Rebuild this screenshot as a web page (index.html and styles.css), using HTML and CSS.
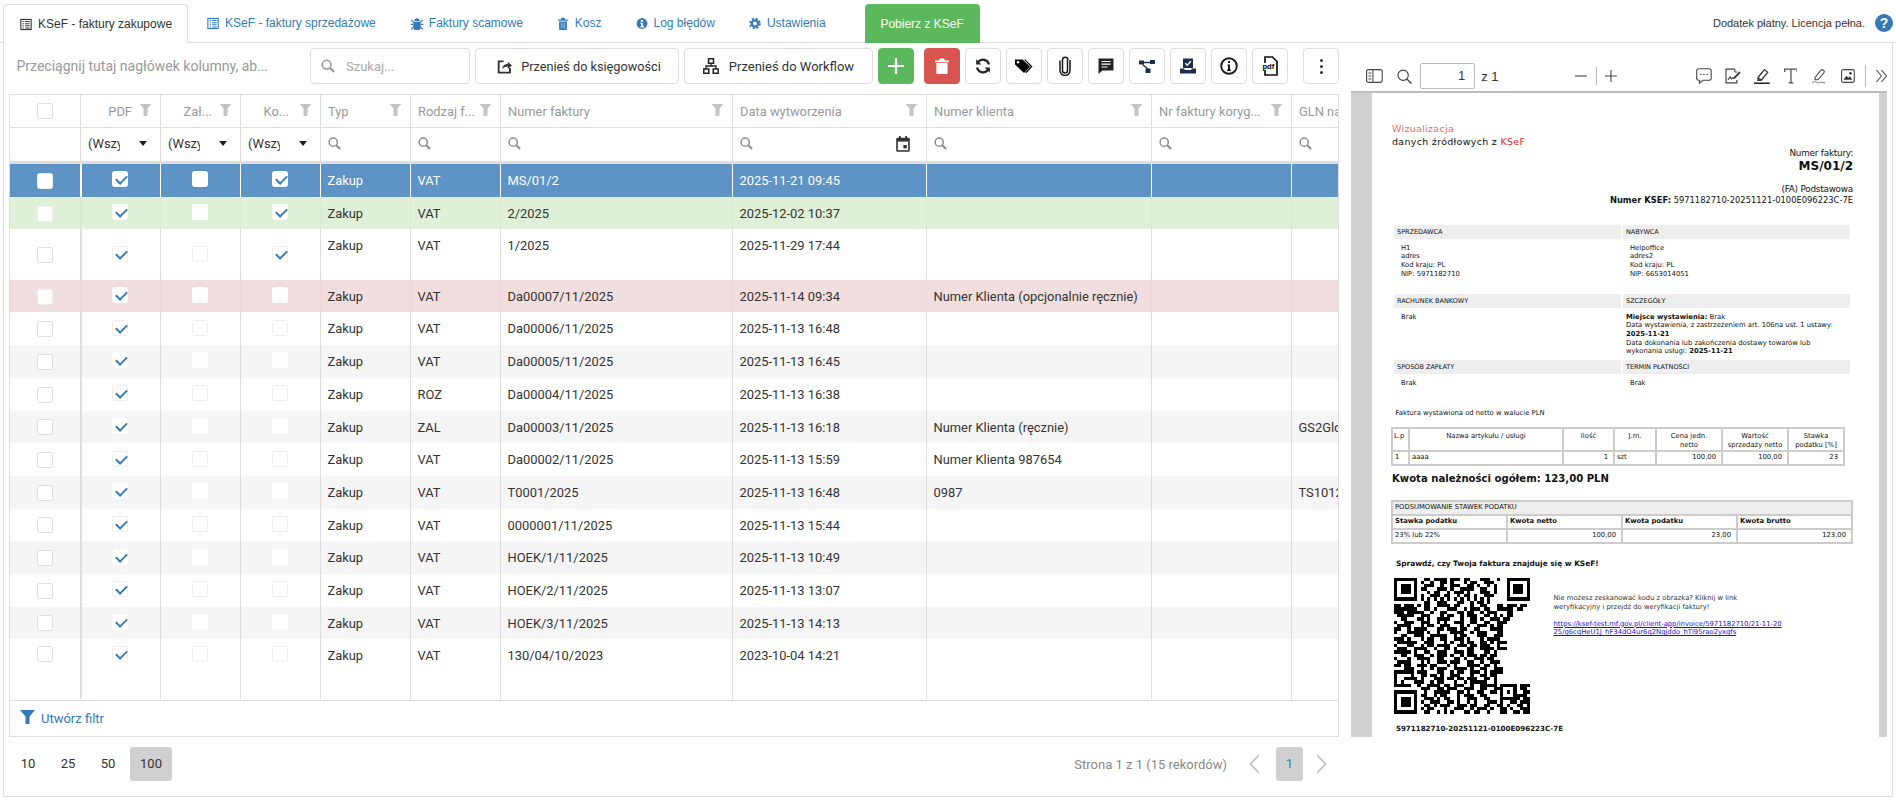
FILE: index.html
```html
<!DOCTYPE html>
<html lang="pl">
<head>
<meta charset="utf-8">
<title>KSeF - faktury zakupowe</title>
<link rel="stylesheet" href="styles.css">
</head>
<body>
<svg class="defs" xmlns="http://www.w3.org/2000/svg">
  <symbol id="i-funnel" viewBox="0 0 15 14"><path d="M0 0h15L9.500 6.500V14h-4V6.500z" fill="currentColor"/></symbol>
  <symbol id="i-search" viewBox="0 0 14 14"><circle cx="5.600" cy="5.600" r="4.400" fill="none" stroke="currentColor" stroke-width="1.600"/><path d="M8.800 8.800L13 13" stroke="currentColor" stroke-width="2.200" fill="none"/></symbol>
  <symbol id="i-list" viewBox="0 0 14 14"><path d="M1 1h12v12H1z" fill="none" stroke="currentColor" stroke-width="1.300"/><path d="M3 3.500h1.500M6 3.500h5.200M3 6h1.500M6 6h5.200M3 8.500h1.500M6 8.500h5.200M3 11h1.500M6 11h5.200" stroke="currentColor" stroke-width="1.200" fill="none"/></symbol>
  <symbol id="i-trash" viewBox="0 0 14 16"><path d="M1 3h12v1.600H1zM5 1h4l.6 2H4.400zM2.200 5.400h9.600V15a1 1 0 0 1-1 1H3.200a1 1 0 0 1-1-1z" fill="currentColor"/><path d="M5 7v7M7 7v7M9 7v7" stroke="#fff" stroke-width=".8" opacity=".7"/></symbol>
</svg>

<div class="tabs">
  <a class="tab active"><svg class="ti" viewBox="0 0 14 14"><use href="#i-list"/></svg>KSeF - faktury zakupowe</a>
  <a class="tab"><svg class="ti" viewBox="0 0 14 14"><use href="#i-list"/></svg>KSeF - faktury sprzedażowe</a>
  <a class="tab"><svg class="ti wide" viewBox="0 0 14 14"><path d="M4.200 4.200a2.800 2.800 0 0 1 5.600 0zM3.600 5h6.800a1 1 0 0 1 .6 1v4.500a4 4 0 0 1-8 0V6a1 1 0 0 1 .6-1z" fill="currentColor"/><path d="M0.800 3l2.400 2.600M13.200 3l-2.400 2.600M.2 8h2.800M11 8h2.800M.8 13.400l2.600-2.600M13.200 13.400l-2.600-2.600" stroke="currentColor" stroke-width="1.300" fill="none"/></svg>Faktury scamowe</a>
  <a class="tab"><svg class="ti" viewBox="0 0 14 16"><use href="#i-trash"/></svg>Kosz</a>
  <a class="tab"><svg class="ti" viewBox="0 0 14 14"><circle cx="7" cy="7" r="6.300" fill="currentColor"/><path d="M5.600 3h2.600v2H5.600zM5.200 6h3v4h1v1.600H5.200V10h1V7.600h-1z" fill="#fff"/></svg>Log błędów</a>
  <a class="tab"><svg class="ti" viewBox="0 0 14 14"><circle cx="7" cy="7" r="3.600" fill="none" stroke="currentColor" stroke-width="2.600"/><circle cx="7" cy="7" r="5.700" fill="none" stroke="currentColor" stroke-width="2" stroke-dasharray="2.500 2"/></svg>Ustawienia</a>
  <a class="tab tab-green">Pobierz z KSeF</a>
  <div class="license">Dodatek płatny. Licencja pełna.<span class="help">?</span></div>
</div>

<div class="panel">
  <div class="left">
    <div class="toolbar">
      <div class="groupby">Przeciągnij tutaj nagłówek kolumny, ab...</div>
      <div class="searchbox"><svg class="sb-icon"><use href="#i-search"/></svg><span>Szukaj...</span></div>
      <button class="btn b1"><svg class="bi" viewBox="0 0 16 16"><path d="M7 2.500H1.800v12h12V9.500" fill="none" stroke="#333" stroke-width="2"/><path d="M5.500 11c.3-3.600 2.600-5.600 6-5.600V3L16 6.800l-4.500 3.800V8c-2.500 0-4.500 1-6 3z" fill="#333"/></svg>Przenieś do księgowości</button>
      <button class="btn b2"><svg class="bi" viewBox="0 0 16 16"><path d="M5.500 .8h5v4.400h-5zM.8 11h5v4.200H.8zM10.200 11h5v4.200h-5z" fill="none" stroke="#222" stroke-width="1.500"/><path d="M8 5v3M3 11V8h10v3" fill="none" stroke="#222" stroke-width="1.300"/></svg>Przenieś do Workflow</button>
      <button class="btn ib green"><svg class="ic16" viewBox="0 0 16 16"><path d="M8 0v16M0 8h16" stroke="#fff" stroke-width="2.200"/></svg></button>
      <button class="btn ib del gap-l"><svg class="ic-trash" viewBox="0 0 14 16"><path d="M0 2.500h14v1.800H0zM4.800 .5h4.400l.6 2H4.200zM1.400 5h11.200v10a1 1 0 0 1-1 1H2.400a1 1 0 0 1-1-1z" fill="#fff"/></svg></button>
      <button class="btn ib"><svg class="ic16" viewBox="0 0 16 16"><path d="M14 6.400A6.200 6.200 0 0 0 3.300 3.800" fill="none" stroke="#222" stroke-width="2.200"/><path d="M1.200 1.300v5.200h5.200z" fill="#222"/><path d="M2 9.600a6.200 6.200 0 0 0 10.700 2.600" fill="none" stroke="#222" stroke-width="2.200"/><path d="M14.800 14.700V9.500H9.600z" fill="#222"/></svg></button>
      <button class="btn ib"><svg class="ic18" viewBox="0 0 18 16"><path d="M0 1.500h7.500L15 8.500l-6 6.500L0 6.500z" fill="#000"/><path d="M9 1.500h1.500L17.500 8.500l-6 6.500-1.300-.8 5.500-5.700z" fill="#000"/><circle cx="3" cy="4.300" r="1.200" fill="#fff"/></svg></button>
      <button class="btn ib"><svg class="ic-clip" viewBox="0 0 12 20"><path d="M8.500 4.500v10a2.500 2.500 0 0 1-5 0V4a2.700 2.700 0 0 1 5.400 0M8.500 4v1M1 4.500v10a5 5 0 0 0 10 0V4" fill="none" stroke="#1a1a1a" stroke-width="1.500"/></svg></button>
      <button class="btn ib"><svg class="ic16" viewBox="0 0 16 16"><path d="M.5 .5h15v12H4.500L.5 16z" fill="#222"/><path d="M3.500 3.500h9M3.500 6.200h9M3.500 9h6" stroke="#fff" stroke-width="1.200"/></svg></button>
      <button class="btn ib"><svg class="ic16" viewBox="0 0 16 16"><path d="M0 2.500h5v4H0zM11 2h5v4h-5zM6.500 10.500h5v4.500h-5z" fill="#1c2e4a"/><path d="M5 4.500h6M3.500 6.500L9 11" stroke="#1c2e4a" stroke-width="1.300"/></svg></button>
      <button class="btn ib"><svg class="ic16" viewBox="0 0 16 16"><path d="M3 .5h10v9.500H3zM0 10.500h4.500v1.500h7v-1.500H16V15.500H0z" fill="#1c2e4a"/><path d="M5.300 5.200L7.300 7.200 10.800 3.300" fill="none" stroke="#fff" stroke-width="1.300"/></svg></button>
      <button class="btn ib"><svg class="ic18" viewBox="0 0 18 18"><circle cx="9" cy="9" r="7.800" fill="none" stroke="#1a1a1a" stroke-width="1.900"/><path d="M8 4h2v2H8zM7.500 7.500H10V12.500h1V14H7V12.500h1V9H7.500z" fill="#1a1a1a"/></svg></button>
      <button class="btn ib"><svg class="ic-pdf" viewBox="0 0 16 20"><path d="M3 1h7.500L15 5.500V19H3z" fill="none" stroke="#111" stroke-width="1.700"/><path d="M0 7h13v7H0z" fill="#fff"/><text class="pdf-txt" x="0.500" y="13">pdf</text></svg></button>
      <button class="btn ib gap-xl"><span class="kebab"><i></i><i></i><i></i></span></button>
    </div>

    <div class="grid">
      <div class="grid-scroll">
      <table class="tbl">
        <colgroup><col class="c1"><col class="c2"><col class="c2"><col class="c2"><col class="c3"><col class="c3"><col class="c4"><col class="c5"><col class="c6"><col class="c7"><col class="c8"></colgroup>
        <thead>
          <tr class="hd">
            <th class="ctr"><span class="cb hcb"></span></th>
            <th><div class="hc end"><span>PDF</span><svg class="fn"><use href="#i-funnel"/></svg></div></th>
            <th><div class="hc end"><span>Zał...</span><svg class="fn"><use href="#i-funnel"/></svg></div></th>
            <th><div class="hc end"><span>Ko...</span><svg class="fn fn-w"><use href="#i-funnel"/></svg></div></th>
            <th><div class="hc"><span>Typ</span><svg class="fn"><use href="#i-funnel"/></svg></div></th>
            <th><div class="hc"><span>Rodzaj f...</span><svg class="fn"><use href="#i-funnel"/></svg></div></th>
            <th><div class="hc"><span>Numer faktury</span><svg class="fn"><use href="#i-funnel"/></svg></div></th>
            <th><div class="hc"><span>Data wytworzenia</span><svg class="fn"><use href="#i-funnel"/></svg></div></th>
            <th><div class="hc"><span>Numer klienta</span><svg class="fn"><use href="#i-funnel"/></svg></div></th>
            <th><div class="hc"><span>Nr faktury koryg...</span><svg class="fn"><use href="#i-funnel"/></svg></div></th>
            <th><div class="hc"><span>GLN nabywcy</span><svg class="fn"><use href="#i-funnel"/></svg></div></th>
          </tr>
          <tr class="fl">
            <th></th>
            <th><div class="sel"><span>(Wszystkie)</span><i></i></div></th>
            <th><div class="sel"><span>(Wszystkie)</span><i></i></div></th>
            <th><div class="sel"><span>(Wszystkie)</span><i></i></div></th>
            <th><svg class="srch"><use href="#i-search"/></svg></th>
            <th><svg class="srch"><use href="#i-search"/></svg></th>
            <th><svg class="srch"><use href="#i-search"/></svg></th>
            <th><div class="datef"><svg class="srch"><use href="#i-search"/></svg><svg class="cal" viewBox="0 0 14 16"><path d="M1.500 1.800h11a1.300 1.300 0 0 1 1.300 1.300V14.500a1.300 1.300 0 0 1-1.300 1.300h-11A1.300 1.300 0 0 1 .2 14.500V3.100a1.300 1.300 0 0 1 1.300-1.300z" fill="#333"/><path d="M3 0h1.800v3H3zM9.200 0H11v3H9.200z" fill="#333"/><path d="M1.800 5.600h10.400v8.600H1.800z" fill="#fff"/><path d="M7.400 9h3.400v3.400H7.400z" fill="#333"/></svg></div></th>
            <th><svg class="srch"><use href="#i-search"/></svg></th>
            <th><svg class="srch"><use href="#i-search"/></svg></th>
            <th><svg class="srch"><use href="#i-search"/></svg></th>
          </tr>
        </thead>
        <tbody>
          <tr class="sel-row"><td class="mid"><span class="cb first"></span></td><td class="mid"><span class="cb on"></span></td><td class="mid"><span class="cb"></span></td><td class="mid"><span class="cb on"></span></td><td>Zakup</td><td>VAT</td><td>MS/01/2</td><td>2025-11-21 09:45</td><td></td><td></td><td></td></tr>
          <tr class="ok-row"><td class="mid"><span class="cb first"></span></td><td class="mid"><span class="cb on"></span></td><td class="mid"><span class="cb"></span></td><td class="mid"><span class="cb on"></span></td><td>Zakup</td><td>VAT</td><td>2/2025</td><td>2025-12-02 10:37</td><td></td><td></td><td></td></tr>
          <tr class="tall"><td class="mid"><span class="cb first"></span></td><td class="mid"><span class="cb on dis"></span></td><td class="mid"><span class="cb dis"></span></td><td class="mid"><span class="cb on dis"></span></td><td>Zakup</td><td>VAT</td><td>1/2025</td><td>2025-11-29 17:44</td><td></td><td></td><td></td></tr>
          <tr class="err-row"><td class="mid"><span class="cb first"></span></td><td class="mid"><span class="cb on"></span></td><td class="mid"><span class="cb"></span></td><td class="mid"><span class="cb"></span></td><td>Zakup</td><td>VAT</td><td>Da00007/11/2025</td><td>2025-11-14 09:34</td><td>Numer Klienta (opcjonalnie ręcznie)</td><td></td><td></td></tr>
          <tr><td class="mid"><span class="cb first"></span></td><td class="mid"><span class="cb on dis"></span></td><td class="mid"><span class="cb dis"></span></td><td class="mid"><span class="cb dis"></span></td><td>Zakup</td><td>VAT</td><td>Da00006/11/2025</td><td>2025-11-13 16:48</td><td></td><td></td><td></td></tr>
          <tr class="alt"><td class="mid"><span class="cb first"></span></td><td class="mid"><span class="cb on"></span></td><td class="mid"><span class="cb"></span></td><td class="mid"><span class="cb"></span></td><td>Zakup</td><td>VAT</td><td>Da00005/11/2025</td><td>2025-11-13 16:45</td><td></td><td></td><td></td></tr>
          <tr><td class="mid"><span class="cb first"></span></td><td class="mid"><span class="cb on dis"></span></td><td class="mid"><span class="cb dis"></span></td><td class="mid"><span class="cb dis"></span></td><td>Zakup</td><td>ROZ</td><td>Da00004/11/2025</td><td>2025-11-13 16:38</td><td></td><td></td><td></td></tr>
          <tr class="alt"><td class="mid"><span class="cb first"></span></td><td class="mid"><span class="cb on"></span></td><td class="mid"><span class="cb"></span></td><td class="mid"><span class="cb"></span></td><td>Zakup</td><td>ZAL</td><td>Da00003/11/2025</td><td>2025-11-13 16:18</td><td>Numer Klienta (ręcznie)</td><td></td><td>GS2Global</td></tr>
          <tr><td class="mid"><span class="cb first"></span></td><td class="mid"><span class="cb on dis"></span></td><td class="mid"><span class="cb dis"></span></td><td class="mid"><span class="cb dis"></span></td><td>Zakup</td><td>VAT</td><td>Da00002/11/2025</td><td>2025-11-13 15:59</td><td>Numer Klienta 987654</td><td></td><td></td></tr>
          <tr class="alt"><td class="mid"><span class="cb first"></span></td><td class="mid"><span class="cb on"></span></td><td class="mid"><span class="cb"></span></td><td class="mid"><span class="cb"></span></td><td>Zakup</td><td>VAT</td><td>T0001/2025</td><td>2025-11-13 16:48</td><td>0987</td><td></td><td>TS101234</td></tr>
          <tr><td class="mid"><span class="cb first"></span></td><td class="mid"><span class="cb on dis"></span></td><td class="mid"><span class="cb dis"></span></td><td class="mid"><span class="cb dis"></span></td><td>Zakup</td><td>VAT</td><td>0000001/11/2025</td><td>2025-11-13 15:44</td><td></td><td></td><td></td></tr>
          <tr class="alt"><td class="mid"><span class="cb first"></span></td><td class="mid"><span class="cb on"></span></td><td class="mid"><span class="cb"></span></td><td class="mid"><span class="cb"></span></td><td>Zakup</td><td>VAT</td><td>HOEK/1/11/2025</td><td>2025-11-13 10:49</td><td></td><td></td><td></td></tr>
          <tr><td class="mid"><span class="cb first"></span></td><td class="mid"><span class="cb on dis"></span></td><td class="mid"><span class="cb dis"></span></td><td class="mid"><span class="cb dis"></span></td><td>Zakup</td><td>VAT</td><td>HOEK/2/11/2025</td><td>2025-11-13 13:07</td><td></td><td></td><td></td></tr>
          <tr class="alt"><td class="mid"><span class="cb first"></span></td><td class="mid"><span class="cb on"></span></td><td class="mid"><span class="cb"></span></td><td class="mid"><span class="cb"></span></td><td>Zakup</td><td>VAT</td><td>HOEK/3/11/2025</td><td>2025-11-13 14:13</td><td></td><td></td><td></td></tr>
          <tr class="last"><td class="top"><span class="cb"></span></td><td class="top"><span class="cb on dis"></span></td><td class="top"><span class="cb dis"></span></td><td class="top"><span class="cb dis"></span></td><td>Zakup</td><td>VAT</td><td>130/04/10/2023</td><td>2023-10-04 14:21</td><td></td><td></td><td></td></tr>
        </tbody>
      </table>
      </div>
      <div class="gridfoot"><svg class="ff" viewBox="0 0 15 14"><use href="#i-funnel"/></svg>Utwórz filtr</div>
    </div>

    <div class="pager">
      <span class="ps">10</span><span class="ps">25</span><span class="ps">50</span><span class="ps cur">100</span>
      <span class="info">Strona 1 z 1 (15 rekordów)</span>
      <svg class="chev" viewBox="0 0 11 20"><path d="M10 1L1.500 10l8.500 9" fill="none" stroke="#c4c4c4" stroke-width="1.800"/></svg>
      <span class="pnum">1</span>
      <svg class="chev" viewBox="0 0 11 20"><path d="M1 1l8.500 9L1 19" fill="none" stroke="#c4c4c4" stroke-width="1.800"/></svg>
    </div>
  </div>

  <div class="viewer">
    <div class="vbar">
      <svg class="v-side" viewBox="0 0 17 14"><rect x=".6" y=".6" width="15.800" height="12.800" rx="2" fill="none" stroke="#444" stroke-width="1.100"/><path d="M7 1v12M2.500 4h3M2.500 7h3M2.500 10h3" stroke="#444" stroke-width="1"/></svg>
      <svg class="v-search" viewBox="0 0 15 15"><circle cx="6.200" cy="6.200" r="5.200" fill="none" stroke="#444" stroke-width="1.200"/><path d="M10 10l4.500 4.500" stroke="#444" stroke-width="1.400"/></svg>
      <span class="v-input">1</span>
      <span class="v-of">z 1</span>
      <svg class="v-minus" viewBox="0 0 12 12"><path d="M0 6h12" stroke="#444" stroke-width="1.100"/></svg>
      <span class="v-sep"></span>
      <svg class="v-plus" viewBox="0 0 12 12"><path d="M0 6h12M6 0v12" stroke="#444" stroke-width="1.100"/></svg>
      <svg class="v-tool first-tool" viewBox="0 0 16 16"><path d="M2.500 .7h11a1.800 1.800 0 0 1 1.800 1.800v8a1.800 1.800 0 0 1-1.800 1.800H7L3.500 15.300v-3H2.500A1.800 1.800 0 0 1 .7 10.500v-8A1.800 1.800 0 0 1 2.500 .7z" fill="none" stroke="#444" stroke-width="1.100"/><path d="M4 6.500h1.500M7.300 6.500h1.500M10.600 6.500h1.500" stroke="#444" stroke-width="1.200"/></svg>
      <svg class="v-tool" viewBox="0 0 16 16"><path d="M10 1H1v14h11v-3" fill="none" stroke="#444" stroke-width="1.200"/><path d="M10 1v3h2.500" fill="none" stroke="#444" stroke-width="1"/><path d="M3 12l2-3 1.500 2 1.500-1.500" fill="none" stroke="#333" stroke-width="1.100"/><path d="M8.500 9.500L14.500 3.500l1.300 1.300-6 6-1.800 .5z" fill="#333"/></svg>
      <svg class="v-tool" viewBox="0 0 16 16"><path d="M4 9.500L10.500 1.500l3.300 2.800-6.500 8H4z" fill="none" stroke="#333" stroke-width="1.300"/><path d="M4.500 10l2.500 2" stroke="#333" stroke-width="1.500"/><path d="M0 15.300h16" stroke="#222" stroke-width="1.500"/></svg>
      <svg class="v-tool v-t" viewBox="0 0 14 16"><path d="M.7 4V1h12.600v3M7 1v14M4.500 15h5" fill="none" stroke="#555" stroke-width="1.300"/></svg>
      <svg class="v-tool v-pen" viewBox="0 0 14 16"><path d="M3 9.500L9.500 1.500c.6-.6 3.500 1.500 3 2.500L6 11.800H3z" fill="none" stroke="#444" stroke-width="1.100"/><path d="M0 15c2-1.500 3-1.500 4.500-.5s2.500-.2 4-.2 3 .5 5 .7" fill="none" stroke="#777" stroke-width="1"/></svg>
      <svg class="v-tool v-img" viewBox="0 0 14 14"><rect x=".6" y=".6" width="12.800" height="12.800" rx="1.500" fill="none" stroke="#444" stroke-width="1.100"/><path d="M2.500 10.800l3-4 2 2 1.500-1.500 2.500 3.500z" fill="#333"/><circle cx="9.500" cy="4.300" r="1.300" fill="#333"/></svg>
      <span class="v-sep2"></span>
      <svg class="v-more" viewBox="0 0 11 14"><path d="M.5 1l5 6-5 6M5.500 1l5 6-5 6" fill="none" stroke="#555" stroke-width="1.100"/></svg>
    </div>
    <div class="vbody">
      <div class="page">
        <div class="wm"><span class="salmon">Wizualizacja</span><br>danych źródłowych z <span class="kred">KSeF</span></div>
        <div class="rt rt1">Numer faktury:</div>
        <div class="rt rt2">MS/01/2</div>
        <div class="rt rt3">(FA) Podstawowa</div>
        <div class="rt rt4"><b>Numer KSEF:</b> 5971182710-20251121-0100E096223C-7E</div>

        <div class="secs s1">
          <div><div class="sh">SPRZEDAWCA</div><div class="sb">H1<br>adres<br>Kod kraju: PL<br>NIP: 5971182710</div></div>
          <div><div class="sh">NABYWCA</div><div class="sb">Helpoffice<br>adres2<br>Kod kraju: PL<br>NIP: 6653014051</div></div>
        </div>
        <div class="secs s2">
          <div><div class="sh">RACHUNEK BANKOWY</div><div class="sb">Brak</div></div>
          <div><div class="sh">SZCZEGÓŁY</div><div class="sb sb-n"><b>Miejsce wystawienia:</b> Brak<br>Data wystawienia, z zastrzeżeniem art. 106na ust. 1 ustawy:<br><b>2025-11-21</b><br>Data dokonania lub zakończenia dostawy towarów lub<br>wykonania usługi: <b>2025-11-21</b></div></div>
        </div>
        <div class="secs s3">
          <div><div class="sh">SPOSÓB ZAPŁATY</div><div class="sb">Brak</div></div>
          <div><div class="sh">TERMIN PŁATNOŚCI</div><div class="sb">Brak</div></div>
        </div>

        <div class="fw">Faktura wystawiona od netto w walucie PLN</div>
        <table class="dt dt1">
          <colgroup><col class="d1"><col class="d2"><col class="d3"><col class="d4"><col class="d5"><col class="d5"><col class="d6"></colgroup>
          <tr class="dh"><th>L.p</th><th class="cc">Nazwa artykułu / usługi</th><th class="cc">Ilość</th><th class="cc">J.m.</th><th class="cc">Cena jedn.<br>netto</th><th class="cc">Wartość<br>sprzedaży netto</th><th class="cc">Stawka<br>podatku [%]</th></tr>
          <tr><td>1</td><td>aaaa</td><td class="rr">1</td><td>szt</td><td class="rr">100,00</td><td class="rr">100,00</td><td class="rr">23</td></tr>
        </table>
        <div class="kw">Kwota należności ogółem: 123,00 PLN</div>
        <table class="dt dt2">
          <tr class="dt-t"><td colspan="4">PODSUMOWANIE STAWEK PODATKU</td></tr>
          <tr><td><b>Stawka podatku</b></td><td><b>Kwota netto</b></td><td><b>Kwota podatku</b></td><td><b>Kwota brutto</b></td></tr>
          <tr><td>23% lub 22%</td><td class="rr">100,00</td><td class="rr">23,00</td><td class="rr">123,00</td></tr>
        </table>
        <div class="chk">Sprawdź, czy Twoja faktura znajduje się w KSeF!</div>
        <div class="qrrow">
          <svg class="qr" viewBox="0 0 41 41" shape-rendering="crispEdges">
            <path fill="none" stroke="#000" stroke-width="1" d="M9 .5h2m1 0h4m1 0h3m1 0h2m3 0h3m2 0h1M8 1.500h1m2 0h1m2 0h2m1 0h1m3 0h1m1 0h2m2 0h3M9 2.500h3m2 0h1m2 0h3m2 0h2m1 0h1m2 0h1m1 0h1M8 3.500h2m3 0h3m1 0h1m2 0h4m2 0h2m2 0h1M10 4.500h1m1 0h2m2 0h1m1 0h3m1 0h1m3 0h3m1 0h1M8 5.500h1m2 0h3m1 0h2m2 0h1m1 0h2m1 0h1m2 0h3M8 6.500h1m1 0h1m1 0h1m1 0h1m1 0h1m1 0h1m1 0h1m1 0h1m1 0h1m1 0h1m1 0h1M9 7.500h2m2 0h3m3 0h2m2 0h1m1 0h2m1 0h1M0 8.500h2m1 0h3m1 0h1m1 0h2m2 0h4m1 0h2m3 0h1m2 0h2m3 0h2m1 0h3m1 0h2M0 9.500h7m2 0h2m1 0h1m3 0h3m2 0h1m1 0h3m1 0h2m2 0h5m1 0h2M0 10.500h3m1 0h5m2 0h1m2 0h2m3 0h2m1 0h2m2 0h1m1 0h3m3 0h2M1 11.500h5m2 0h3m3 0h1m1 0h2m2 0h1m1 0h3m2 0h2m1 0h1m1 0h1m1 0h2M2 12.500h2m3 0h2m1 0h1m2 0h4m3 0h1m2 0h2m1 0h1m2 0h3m1 0h2M0 13.500h1m2 0h3m2 0h3m2 0h1m1 0h1m2 0h3m2 0h2m2 0h2m2 0h3M1 14.500h4m3 0h1m1 0h2m2 0h3m3 0h1m1 0h1m2 0h3m1 0h1m1 0h2M0 15.500h2m2 0h1m1 0h4m3 0h2m1 0h3m1 0h2m2 0h2m3 0h4M0 16.500h1m3 0h5m1 0h1m2 0h1m3 0h4m2 0h1m1 0h3m3 0h2M2 17.500h2m2 0h3m2 0h5m2 0h1m1 0h2m3 0h3m2 0h3M0 18.500h3m1 0h1m3 0h1m1 0h2m2 0h2m2 0h3m1 0h1m3 0h1m1 0h4M1 19.500h6m2 0h3m3 0h1m1 0h1m2 0h1m1 0h2m2 0h2m1 0h1m1 0h3M0 20.500h1m3 0h2m2 0h1m1 0h2m1 0h4m2 0h3m1 0h2m1 0h3m2 0h1M1 21.500h3m2 0h4m2 0h1m2 0h2m1 0h1m3 0h2m2 0h4m1 0h3M0 22.500h5m1 0h1m2 0h2m2 0h3m2 0h3m1 0h2m3 0h2m1 0h1M2 23.500h2m2 0h3m2 0h1m1 0h3m1 0h1m2 0h1m1 0h3m1 0h2m1 0h2M0 24.500h1m3 0h1m2 0h4m2 0h2m3 0h2m1 0h1m2 0h3m1 0h2M1 25.500h4m3 0h1m1 0h1m2 0h3m1 0h3m2 0h2m2 0h1m2 0h3M0 26.500h2m1 0h2m2 0h3m1 0h2m3 0h1m1 0h1m3 0h4m1 0h2m1 0h1M3 27.500h3m2 0h1m2 0h1m1 0h3m2 0h4m1 0h1m2 0h2m2 0h3M0 28.500h6m1 0h3m3 0h2m2 0h1m1 0h2m2 0h3m1 0h1m1 0h4M0 29.500h1m4 0h1m2 0h2m1 0h2m1 0h1m2 0h3m3 0h1m2 0h2m1 0h2M0 30.500h1m2 0h4m1 0h1m3 0h3m1 0h2m1 0h2m1 0h3m2 0h2m1 0h1M0 31.500h1m1 0h1m3 0h3m2 0h1m1 0h2m3 0h1m2 0h1m1 0h5m2 0h1M0 32.500h5m2 0h1m2 0h4m1 0h2m1 0h3m2 0h1m2 0h5m1 0h2m4 0h3M8 33.500h3m2 0h2m1 0h3m2 0h3m2 0h2m2 0h3m5 0h2M9 34.500h1m2 0h5m2 0h2m1 0h1m2 0h2m2 0h2m8 0h2M8 35.500h2m2 0h1m1 0h2m3 0h1m1 0h3m2 0h2m9 0h3M9 36.500h3m1 0h1m1 0h2m2 0h1m2 0h3m2 0h2m6 0h3m1 0h2M8 37.500h1m2 0h3m2 0h2m1 0h1m2 0h1m1 0h1m3 0h3m1 0h1m2 0h2m1 0h3M9 38.500h2m1 0h1m1 0h3m2 0h3m1 0h2m2 0h2m2 0h2m1 0h1m2 0h2m1 0h1M8 39.500h1m1 0h2m3 0h1m2 0h3m2 0h1m1 0h3m1 0h1m2 0h2m1 0h1m2 0h3M9 40.500h2m2 0h1m1 0h1m1 0h1m3 0h2m1 0h2m2 0h1m3 0h2m2 0h2m1 0h2"/>
            <path fill="#fff" d="M0 0h8v8H0zM33 0h8v8h-8zM0 33h8v8H0zM32 32h5v5h-5z"/>
            <path fill="#000" fill-rule="evenodd" d="M0 0h7v7H0zM1 1v5h5V1zM2 2h3v3H2zM34 0h7v7h-7zM35 1v5h5V1zM36 2h3v3h-3zM0 34h7v7H0zM1 35v5h5v-5zM2 36h3v3H2zM32 32h5v5h-5zM33 33v3h3v-3zM34 34h1v1h-1z"/>
          </svg>
          <div class="qrtxt">
            Nie możesz zeskanować kodu z obrazka? Kliknij w link<br>weryfikacyjny i przejdź do weryfikacji faktury!
            <a class="qrlink">https://ksef-test.mf.gov.pl/client-app/invoice/5971182710/21-11-20<br>25/g6cqHeU1J_hF34dO4ur6q2Nqjddo_hTl95rao2yxqfs</a>
          </div>
        </div>
        <div class="kid">5971182710-20251121-0100E096223C-7E</div>
      </div>
    </div>
  </div>
</div>
</body>
</html>
```
FILE: styles.css
```css
* { box-sizing: border-box; }
html, body { margin: 0; padding: 0; background: #fff; }
body { width: 1896px; height: 800px; overflow: hidden; font-family: Roboto, sans-serif; font-size: 13px; color: #333; }
.defs { display: none; }

/* Tabs */
.tabs { display: flex; align-items: stretch; height: 43px; padding: 4px 3px 0 3px; border-bottom: 1px solid #ddd; font-family: "Liberation Sans", Arial, sans-serif; font-size: 12px; }
.tab { display: flex; align-items: center; padding: 0 17px 0 17px; height: 38px; color: #337ab7; white-space: nowrap; }
.tab.active { height: 39px; margin-right: 2px; padding: 0 15px 0 16px; color: #333; background: #fff; border: 1px solid #ddd; border-bottom: 0; border-radius: 4px 4px 0 0; }
.ti { width: 12px; height: 13px; margin-right: 6px; flex: none; }
.ti.wide { width: 14px; margin-right: 5px; }
.tab-green { margin-left: 22px; padding: 0; width: 115px; justify-content: center; height: 39px; background: #5cb85c; color: #fff; border-radius: 4px 4px 0 0; }
.license { margin-left: auto; display: flex; align-items: center; height: 38px; font-size: 11px; color: #333; }
.help { width: 18px; height: 18px; margin-left: 10px; border-radius: 50%; background: #337ab7; color: #fff; font-weight: 700; font-size: 14px; line-height: 18px; text-align: center; }

/* Panel */
.panel { display: flex; height: 754px; margin: 0 3px; border: 1px solid #ddd; border-top: 0; padding: 0 4px 0 5px; }
.left { width: 1330px; flex: none; display: flex; flex-direction: column; }

/* Toolbar */
.toolbar { display: flex; gap: 5px; margin-top: 5px; height: 36px; }
.groupby { width: 296px; padding-left: 7.500px; line-height: 36px; font-size: 14px; color: #999; white-space: nowrap; overflow: hidden; }
.searchbox { width: 160px; display: flex; align-items: center; padding-left: 10px; border: 1px solid #ddd; border-radius: 4px; color: #aaa; }
.sb-icon { width: 14px; height: 14px; margin-right: 11px; color: #999; }
.btn { display: flex; align-items: center; justify-content: center; height: 36px; margin: 0; padding: 0; background: #fff; border: 1px solid #ddd; border-radius: 4px; font-family: Roboto, sans-serif; font-size: 13px; color: #333; }
.b1 { width: 204px; padding-left: 4px; font-size: 12.700px; }
.b1 .bi { margin-right: 9px; width: 15px; height: 15px; }
.b2 { width: 189px; }
.bi { width: 16px; height: 16px; margin-right: 10px; }
.ib { width: 36px; }
.green { background: #5cb85c; border-color: #5cb85c; }
.del { background: #d9534f; border-color: #d9534f; }
.gap-l { margin-left: 5px; }
.gap-xl { margin-left: 10px; }
.ic16 { width: 16px; height: 16px; }
.ic18 { width: 18px; height: 18px; }
.ic-trash { width: 14px; height: 16px; }
.ic-clip { width: 12px; height: 20px; }
.ic-pdf { width: 16px; height: 20px; }
.pdf-txt { font-family: "Liberation Sans", sans-serif; font-weight: 700; font-size: 7.500px; fill: #000; }
.kebab { display: flex; flex-direction: column; gap: 3px; }
.kebab i { display: block; width: 3px; height: 3px; border-radius: 50%; background: #333; }

/* Grid */
.grid { margin-top: 10px; height: 643px; border: 1px solid #ddd; display: flex; flex-direction: column; }
.grid-scroll { height: 605px; overflow: hidden; flex: none; }
.tbl { table-layout: fixed; width: 1431px; border-collapse: separate; border-spacing: 0; font-size: 12.900px; }
.c1 { width: 70px; } .c2 { width: 80px; } .c3 { width: 90px; } .c4 { width: 232px; } .c5 { width: 194px; } .c6 { width: 225px; } .c7 { width: 140px; } .c8 { width: 150px; }
.tbl th { padding: 0; font-weight: 400; border-left: 1px solid #ddd; }
.tbl th:first-child { border-left: 0; }
.hd th { height: 33px; border-bottom: 1px solid #ddd; color: #999; text-align: left; }
.fl th { height: 36px; border-bottom: 3px solid #ddd; text-align: left; padding-bottom: 2px; }
th.ctr { text-align: center; }
.hc { display: flex; align-items: center; justify-content: space-between; padding: 0 7px; white-space: nowrap; overflow: hidden; }
.hc.end { justify-content: flex-end; gap: 6px; }
.fn { width: 15px; height: 14px; flex: none; color: #c4c4c4; margin-top: -4px; }
.fn-w { margin-left: 3px; }
.sel { display: flex; align-items: center; padding: 0 13px 0 7px; color: #333; }
.sel span { width: 32px; overflow: hidden; white-space: nowrap; }
.sel i { margin-left: auto; width: 0; height: 0; border: 4px solid transparent; border-top: 5px solid #222; border-bottom: 0; }
.srch { display: block; width: 13px; height: 13px; margin-left: 7px; color: #8d8d8d; }
.datef { display: flex; align-items: center; justify-content: space-between; padding-right: 16px; }
.cal { width: 14px; height: 16px; }

.tbl td { height: 32.700px; padding: 8px 7px 0 6.500px; vertical-align: top; line-height: 18px; border-left: 1px solid #ddd; white-space: nowrap; overflow: hidden; color: #333; }
.tbl td:first-child { border-left: 0; }
.tbl td:nth-child(2) { border-left-width: 2px; }
.tbl td.mid { padding: 0 1px 2px 0; vertical-align: middle; }
.tbl td.top { padding: 7px 1px 0 0; }
.tbl td:nth-child(2).mid, .tbl td:nth-child(2).top { padding-right: 2px; }
.tall td { height: 50.400px; }
.last td { height: 60px; }
.alt td { background: #f5f5f5; }
.sel-row td { background: #5e93c5; color: #fff; border-left-color: #fff; }
.ok-row td { background: #dff0d8; border-left-color: #d8e8d2; }
.err-row td { background: #f2dede; border-left-color: #ebd8d8; }

.cb { display: block; position: relative; width: 16px; height: 16px; margin: 0 auto; background: #fff; border: 1px solid #fff; border-radius: 2.500px; }
.cb.first, .hcb, .last td:first-child .cb { border-color: #ddd; }
.cb.first { margin-top: 3px; }
.cb.dis { border-color: #eee; }
.sel-row .cb.first, .ok-row .cb.first, .err-row .cb.first { border-color: #eee; }
.cb.on::after { content: ""; position: absolute; left: 3px; top: 3px; width: 9px; height: 5px; border-left: 2px solid #337ab7; border-bottom: 2px solid #337ab7; transform: rotate(-45deg); }

.gridfoot { flex: 1; display: flex; align-items: center; padding-left: 10px; border-top: 1px solid #ddd; color: #337ab7; font-size: 13px; }
.ff { width: 15px; height: 14px; margin-right: 6px; margin-top: -4px; color: #337ab7; }

/* Pager */
.pager { display: flex; align-items: center; height: 34px; margin-top: 10px; }
.ps { width: 40px; height: 34px; line-height: 34px; text-align: center; border-radius: 3px; color: #333; }
.ps:first-child { margin-left: -1px; }
.ps.cur { width: 42px; margin-left: 2px; background: #d0d0d0; }
.info { margin-left: auto; color: #888; margin-right: 22px; }
.chev { width: 11px; height: 20px; }
.pnum { width: 27px; height: 34px; margin: 0 13px 0 16px; line-height: 34px; text-align: center; border-radius: 3px; background: #d0d0d0; color: #337ab7; }
.pager .chev:last-child { margin-right: 12px; }

/* Viewer */
.viewer { margin-left: 12px; width: 536px; display: flex; flex-direction: column; height: 694px; }
.vbar { display: flex; align-items: center; height: 50px; padding: 18px 0 0 15px; border-bottom: 2px solid #bdbdbd; flex: none; font-family: "Liberation Sans", sans-serif; font-size: 13px; color: #333; }
.v-side { width: 17px; height: 14px; }
.v-search { width: 15px; height: 15px; margin-left: 14px; }
.v-input { width: 56px; height: 26px; margin-left: 8px; padding-right: 9px; line-height: 24px; text-align: right; border: 1px solid #bbb; border-radius: 2px; font-size: 13px; }
.v-of { margin-left: 6px; width: 14px; white-space: nowrap; }
.v-minus { width: 12px; height: 12px; margin-left: 80px; }
.v-sep { width: 1px; height: 18px; margin-left: 9px; background: #bbb; }
.v-plus { width: 12px; height: 12px; margin-left: 8px; }
.v-tool { width: 16px; height: 16px; margin-left: 13px; }
.first-tool { margin-left: 79px; }
.v-t { width: 14px; margin-left: 14px; }
.v-pen { width: 14px; margin-left: 15px; }
.v-img { width: 14px; height: 14px; margin-left: 15px; }
.v-sep2 { width: 1px; height: 22px; margin-left: 10px; background: #bbb; }
.v-more { width: 11px; height: 14px; margin-left: 10px; }
.vbody { flex: 1; background: #d1d1d3; padding: 0 8px 0 21px; overflow: hidden; min-height: 0; }
.page { height: 100%; background: #fff; overflow: hidden; font-family: "DejaVu Sans", sans-serif; font-size: 6.800px; line-height: 8.700px; color: #111; }
.wm { margin: 29px 0 0 20px; font-size: 9.500px; line-height: 13px; letter-spacing: .3px; color: #111; }
.salmon { color: #f56a5e; }
.kred { color: #ee2222; }
.rt { text-align: right; padding-right: 26px; white-space: nowrap; }
.rt1 { font-size: 8.800px; line-height: 10px; letter-spacing: -.2px; }
.rt2 { font-size: 12px; line-height: 14px; margin-top: 1px; font-weight: 700; }
.rt3 { font-size: 8.800px; line-height: 10px; margin-top: 11px; letter-spacing: -.2px; }
.rt4 { font-size: 8.350px; line-height: 10px; margin-top: 1px; }
.secs { display: grid; grid-template-columns: 227px 227px; column-gap: 2px; margin-left: 22px; }
.s1 { margin-top: 20px; height: 69px; }
.s2 { height: 66px; }
.s3 { height: 49px; }
.sh { height: 14px; padding-left: 3px; line-height: 14px; background: #eee; font-size: 6.500px; white-space: nowrap; }
.sb { padding: 4.500px 0 0 7px; white-space: nowrap; }
.sb-n { padding-left: 3px; }
.fw { margin-left: 23.500px; line-height: 9px; }
.dt { border-collapse: collapse; margin-left: 19px; table-layout: fixed; font-size: 6.800px; line-height: 9px; }
.dt td, .dt th { border: 2px solid #ccc; padding: 2px 2px; font-weight: 400; text-align: left; white-space: nowrap; overflow: hidden; }
.dt1 { width: 452px; margin-top: 8.500px; }
.d1 { width: 17px; } .d2 { width: 154px; } .d3 { width: 51px; } .d4 { width: 42px; } .d5 { width: 66px; } .d6 { width: 56px; }
.dt .dh th { height: 22px; padding: 3px 1px 0; vertical-align: top; }
.dt1 td { height: 14px; padding: 0 2px; }
.dt th.cc { text-align: center; }
.dt td.rr { text-align: right; padding-right: 5px; }
.kw { margin: 6px 0 0 20px; font-size: 10.100px; line-height: 14px; font-weight: 700; white-space: nowrap; }
.dt2 { width: 462px; margin-top: 14px; }
.dt2 td { height: 14px; padding: 0 2px; }
.dt-t td { background: #eee; }
.chk { margin: 15px 0 0 24px; font-size: 7.400px; line-height: 10px; font-weight: 700; white-space: nowrap; }
.qrrow { display: flex; margin: 8px 0 0 22px; }
.qr { width: 136px; height: 137px; flex: none; }
.qrtxt { margin: 17px 0 0 23.500px; color: #333; white-space: nowrap; line-height: 9px; }
.qrlink { display: block; margin-top: 8px; color: #1414e6; text-decoration: underline; line-height: 8.600px; }
.kid { margin: 10px 0 0 24px; font-size: 7.100px; line-height: 10px; font-weight: 700; white-space: nowrap; }
```
